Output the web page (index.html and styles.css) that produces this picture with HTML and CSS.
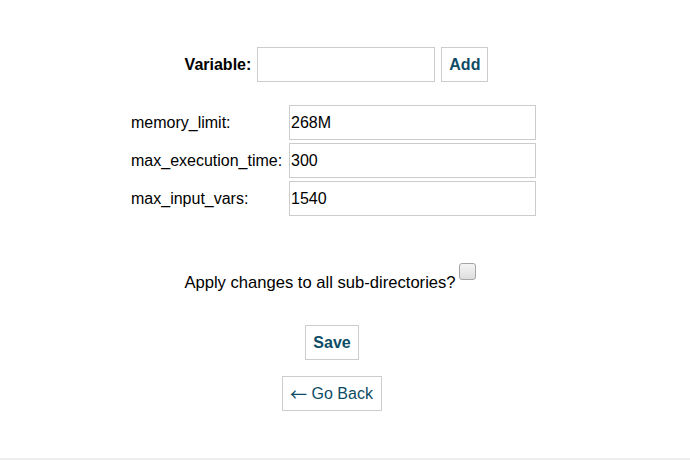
FILE: index.html
```html
<!DOCTYPE html>
<html>
<head>
<meta charset="utf-8">
<link rel="stylesheet" href="styles.css">
</head>
<body>
<div class="page">
  <form class="add-row">
    <label class="var-label" for="var">Variable:</label>
    <input class="var-input" id="var" type="text">
    <button class="btn btn-bold" type="button">Add</button>
  </form>

  <div class="vars">
    <label class="vars-label">memory_limit:</label>
    <input class="vars-input" type="text" value="268M">
    <label class="vars-label">max_execution_time:</label>
    <input class="vars-input" type="text" value="300">
    <label class="vars-label">max_input_vars:</label>
    <input class="vars-input" type="text" value="1540">
  </div>

  <div class="apply-row">
    <span class="apply-text">Apply changes to all sub-directories?</span>
    <input class="check" type="checkbox">
  </div>

  <div class="actions">
    <button class="btn btn-bold" type="button">Save</button>
    <button class="btn btn-back" type="button"><span class="arrow">&larr;</span> Go Back</button>
  </div>
</div>
<div class="footer-line"></div>
</body>
</html>
```

FILE: styles.css
```css
html, body {
  margin: 0;
  padding: 0;
  background: #fff;
}

body {
  font-family: "Liberation Sans", Arial, sans-serif;
  font-size: 16px;
  color: #000;
}

.page {
  width: 664px;
  padding-top: 47px;
  display: flex;
  flex-direction: column;
  align-items: center;
}

.add-row {
  display: flex;
  align-items: center;
  margin: 0;
  padding-left: 9px;
}

.var-label {
  font-weight: bold;
  margin-right: 1px;
}

.var-input {
  box-sizing: border-box;
  width: 178px;
  height: 35px;
  margin: 0 0 0 5px;
  border: 1px solid #ccc;
  padding: 0 1px;
  font: 16px "Liberation Sans", Arial, sans-serif;
  outline: none;
}

.btn {
  box-sizing: border-box;
  height: 35px;
  background: #fff;
  border: 1px solid #ccc;
  border-radius: 0;
  padding: 0 7px;
  font-family: "Liberation Sans", Arial, sans-serif;
  font-size: 16px;
  line-height: 18px;
  color: #0e4c66;
  cursor: pointer;
}

.add-row .btn {
  margin-left: 6px;
}

.btn-bold {
  font-weight: bold;
}

.btn-back {
  padding: 0 8px 0 7px;
  font-weight: normal;
}

.arrow {
  font-family: "Noto Sans CJK SC", "DejaVu Sans", sans-serif;
  font-size: 17px;
  line-height: 0;
  vertical-align: -2px;
}

.vars {
  display: grid;
  grid-template-columns: 158px 247px;
  row-gap: 3px;
  align-items: center;
  margin-top: 23px;
  padding-left: 3px;
}

.vars-input {
  box-sizing: border-box;
  height: 35px;
  width: 247px;
  margin: 0;
  border: 1px solid #ccc;
  padding: 0 1px;
  font: 16px "Liberation Sans", Arial, sans-serif;
  color: #000;
  outline: none;
}

.apply-row {
  display: flex;
  align-items: flex-start;
  margin-top: 47px;
  padding-right: 4px;
}

.apply-text {
  font-size: 16.6px;
  line-height: 18px;
  margin-top: 11px;
}

.check {
  appearance: none;
  -webkit-appearance: none;
  box-sizing: border-box;
  width: 17px;
  height: 17px;
  margin: 0 0 0 3px;
  border: 1px solid #a5a5a5;
  border-radius: 3px;
  background: linear-gradient(#f4f4f4, #dedede);
}

.actions {
  display: flex;
  flex-direction: column;
  align-items: center;
  gap: 16px;
  margin-top: 33px;
}

.footer-line {
  margin-top: 47px;
  height: 2px;
  background: #eeeeee;
}
```
